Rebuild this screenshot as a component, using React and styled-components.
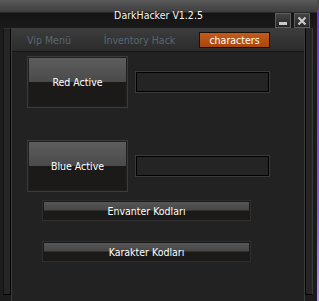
import React from "react";
import styled, { createGlobalStyle } from "styled-components";

const GlobalStyle = createGlobalStyle`
  html, body {
    margin: 0;
    padding: 0;
    width: 319px;
    height: 301px;
    overflow: hidden;
    background: linear-gradient(#4a4a4a 0, #4a4a4a 10px, #6d33d6 10px, #8a5ae8 70%, #b59af0 100%);
    font-family: "DejaVu Sans Condensed", "DejaVu Sans", sans-serif;
  }
`;

const Window = styled.div`
  width: 317px;
  height: 301px;
  background: #1c1c1c;
  display: flex;
  flex-direction: column;
`;

const TitleBar = styled.div`
  height: 28px;
  flex: none;
  display: grid;
  grid-template-columns: 1fr auto 1fr;
  background: linear-gradient(#5a5a5a 0, #3e3e3e 12px, #141414 13px, #1a1a1a 28px);
`;

const Title = styled.div`
  grid-column: 2;
  margin-top: 9px;
  color: #f4f4f4;
  font-size: 10.5px;
  line-height: 12px;
`;

const Controls = styled.div`
  grid-column: 3;
  justify-self: end;
  align-self: end;
  display: flex;
  gap: 3px;
  margin-right: 7px;
`;

const ControlButton = styled.div`
  width: 14px;
  height: 13px;
  border: 1px solid #5e5e5e;
  background: linear-gradient(#444, #262626);
  display: flex;
  align-items: center;
  justify-content: center;
`;

const Body = styled.div`
  flex: 1;
  display: flex;
  padding-left: 3px;
  min-height: 0;
`;

const Rail = styled.div`
  width: 6px;
  height: 265px;
  flex: none;
  background: #252525;
  border-top: 1px solid #2e2e2e;
  border-bottom: 1px solid #000;
  border-left: 1px solid ${(p) => (p.$side === "left" ? "#141414" : "#060606")};
  border-right: 1px solid ${(p) => (p.$side === "left" ? "#060606" : "#3a3a3a")};
`;

const Panel = styled.div`
  width: 292px;
  flex: none;
  background: #222222;
  border-left: 1px solid #3c3c3c;
  border-right: 1px solid #3c3c3c;
  border-top: 1px solid #3c3c3c;
  display: flex;
  flex-direction: column;
`;

const TabBar = styled.div`
  height: 22px;
  display: flex;
  align-items: center;
  padding-left: 2px;
  background: linear-gradient(#3c3c3c, #2b2b2b);
  border-bottom: 1px solid #161616;
`;

const Tab = styled.div`
  width: ${(p) => p.$w}px;
  margin-left: ${(p) => p.$ml || 0}px;
  height: 14px;
  display: flex;
  align-items: center;
  justify-content: center;
  font-size: 10.5px;
  color: ${(p) => (p.$active ? "#ffffff" : "#5a6671")};
  background: ${(p) => (p.$active ? "linear-gradient(#c25c1a, #a9470b)" : "transparent")};
  border: 1px solid ${(p) => (p.$active ? "#1a0e06" : "transparent")};
`;

const Content = styled.div`
  display: flex;
  flex-direction: column;
  padding: 4px 0 0 15px;
`;

const Row = styled.div`
  display: flex;
  align-items: center;
  gap: 8px;
  margin-bottom: ${(p) => p.$gap}px;
`;

const BigButton = styled.div`
  width: 99px;
  height: 50px;
  border: 1px solid #3a3a3a;
  background: linear-gradient(#5e5e5e 0, #4a4a4a 50%, #1c1a18 50%, #1c1a18 100%);
  color: #ffffff;
  font-size: 10.5px;
  display: flex;
  align-items: center;
  justify-content: center;
  box-shadow: inset 0 0 0 1px #202020;
`;

const Field = styled.div`
  width: 131px;
  height: 18px;
  background: #242424;
  border: 1px solid #000;
  box-shadow: 0 0 0 1px #3a3a3a;
`;

const WideButton = styled.div`
  width: 207px;
  height: 19px;
  margin-left: 15px;
  margin-bottom: ${(p) => p.$gap}px;
  border: 1px solid #2e2e2e;
  background: linear-gradient(#585858 0, #474747 48%, #1c1a18 52%, #1c1a18 100%);
  color: #ffffff;
  font-size: 10.5px;
  display: flex;
  align-items: center;
  justify-content: center;
  box-shadow: inset 0 0 0 1px #1a1a1a;
`;

const Edge = styled.div`
  width: 4px;
  flex: none;
  background: #1b1b1b;
`;

const App = () => {
  return (
    <>
      <GlobalStyle />
      <Window>
        <TitleBar>
          <Title>DarkHacker V1.2.5</Title>
          <Controls>
            <ControlButton>
              <svg width="10" height="10" viewBox="0 0 10 10">
                <rect x="1" y="6" width="8" height="3" fill="#c9c9c9" />
              </svg>
            </ControlButton>
            <ControlButton>
              <svg width="10" height="10" viewBox="0 0 10 10">
                <path d="M1.5 1.5 L8.5 8.5 M8.5 1.5 L1.5 8.5" stroke="#c9c9c9" strokeWidth="2.2" />
              </svg>
            </ControlButton>
          </Controls>
        </TitleBar>
        <Body>
          <Rail $side="left" />
          <Panel>
            <TabBar>
              <Tab $w={68}>Vip Menü</Tab>
              <Tab $w={109}>İnventory Hack</Tab>
              <Tab $w={69} $ml={4} $active>characters</Tab>
            </TabBar>
            <Content>
              <Row $gap={32}>
                <BigButton>Red Active</BigButton>
                <Field />
              </Row>
              <Row $gap={8}>
                <BigButton>Blue Active</BigButton>
                <Field />
              </Row>
              <WideButton $gap={20}>Envanter Kodları</WideButton>
              <WideButton $gap={0}>Karakter Kodları</WideButton>
            </Content>
          </Panel>
          <Rail $side="right" />
          <Edge />
        </Body>
      </Window>
    </>
  );
};

export default App;
